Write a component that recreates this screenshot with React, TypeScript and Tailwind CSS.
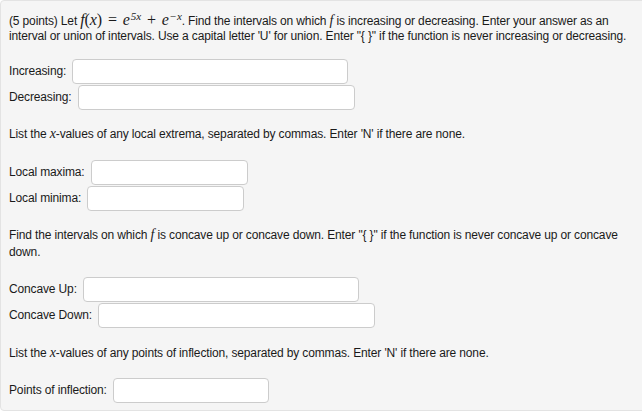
import React from "react";

const M = ({ children, big }: { children: React.ReactNode; big?: boolean }) => (
  <span
    className={`italic leading-none ${big ? "text-[16px]" : "text-[14px]"}`}
    style={{ fontFamily: '"Liberation Serif", "DejaVu Serif", serif' }}
  >
    {children}
  </span>
);

function Field({ label, width }: { label: string; width: string }) {
  return (
    <div className="flex items-start h-[26px]">
      <span className="leading-[25px]">{label}</span>
      <input
        type="text"
        className={`ml-[6px] h-[25px] ${width} bg-white border border-[#cccccc] rounded-[4px] outline-none`}
      />
    </div>
  );
}

export default function App() {
  return (
    <div className="w-[642px] h-[418px] overflow-hidden bg-white">
      <div
        className="w-[660px] bg-[#f5f5f5] border border-[#e3e3e3] rounded-[4px] pl-[8px] pt-[11px] pb-[6px] text-[12px] tracking-[-0.14px] text-[#1a1a1a]"
        style={{ fontFamily: '"Liberation Sans", Arial, sans-serif' }}
      >
        <p className="h-[30px] leading-[15px]">
          (5 points) Let{" "}
          <M big>
            f<span className="not-italic">(</span>x<span className="not-italic">)</span>
            <span className="not-italic mx-[6px]">=</span>e<sup className="text-[11px] ml-[1px]">5x</sup>
            <span className="not-italic mx-[6px]">+</span>e
            <sup className="text-[11px] ml-[1px]">
              <span className="not-italic mr-[1px]">−</span>x
            </sup>
          </M>
          . Find the intervals on which <M>f</M> is increasing or decreasing. Enter your answer as an
          <br />
          interval or union of intervals. Use a capital letter 'U' for union. Enter "{"{ }"}" if the function is never increasing or decreasing.
        </p>

        <div className="mt-[17px]">
          <Field label="Increasing:" width="w-[276px]" />
          <Field label="Decreasing:" width="w-[277px]" />
        </div>

        <p className="mt-[15px] h-[16px] leading-[16px]">
          List the <M>x</M>-values of any local extrema, separated by commas. Enter 'N' if there are none.
        </p>

        <div className="mt-[18px]">
          <Field label="Local maxima:" width="w-[157px]" />
          <Field label="Local minima:" width="w-[157px]" />
        </div>

        <p className="mt-[15px] h-[34px] leading-[17px]">
          Find the intervals on which <M>f</M> is concave up or concave down. Enter "{"{ }"}" if the function is never concave up or concave
          <br />
          down.
        </p>

        <div className="mt-[16px]">
          <Field label="Concave Up:" width="w-[276px]" />
          <Field label="Concave Down:" width="w-[277px]" />
        </div>

        <p className="mt-[16px] h-[16px] leading-[16px]">
          List the <M>x</M>-values of any points of inflection, separated by commas. Enter 'N' if there are none.
        </p>

        <div className="mt-[17px]">
          <Field label="Points of inflection:" width="w-[156px]" />
        </div>
      </div>
    </div>
  );
}
